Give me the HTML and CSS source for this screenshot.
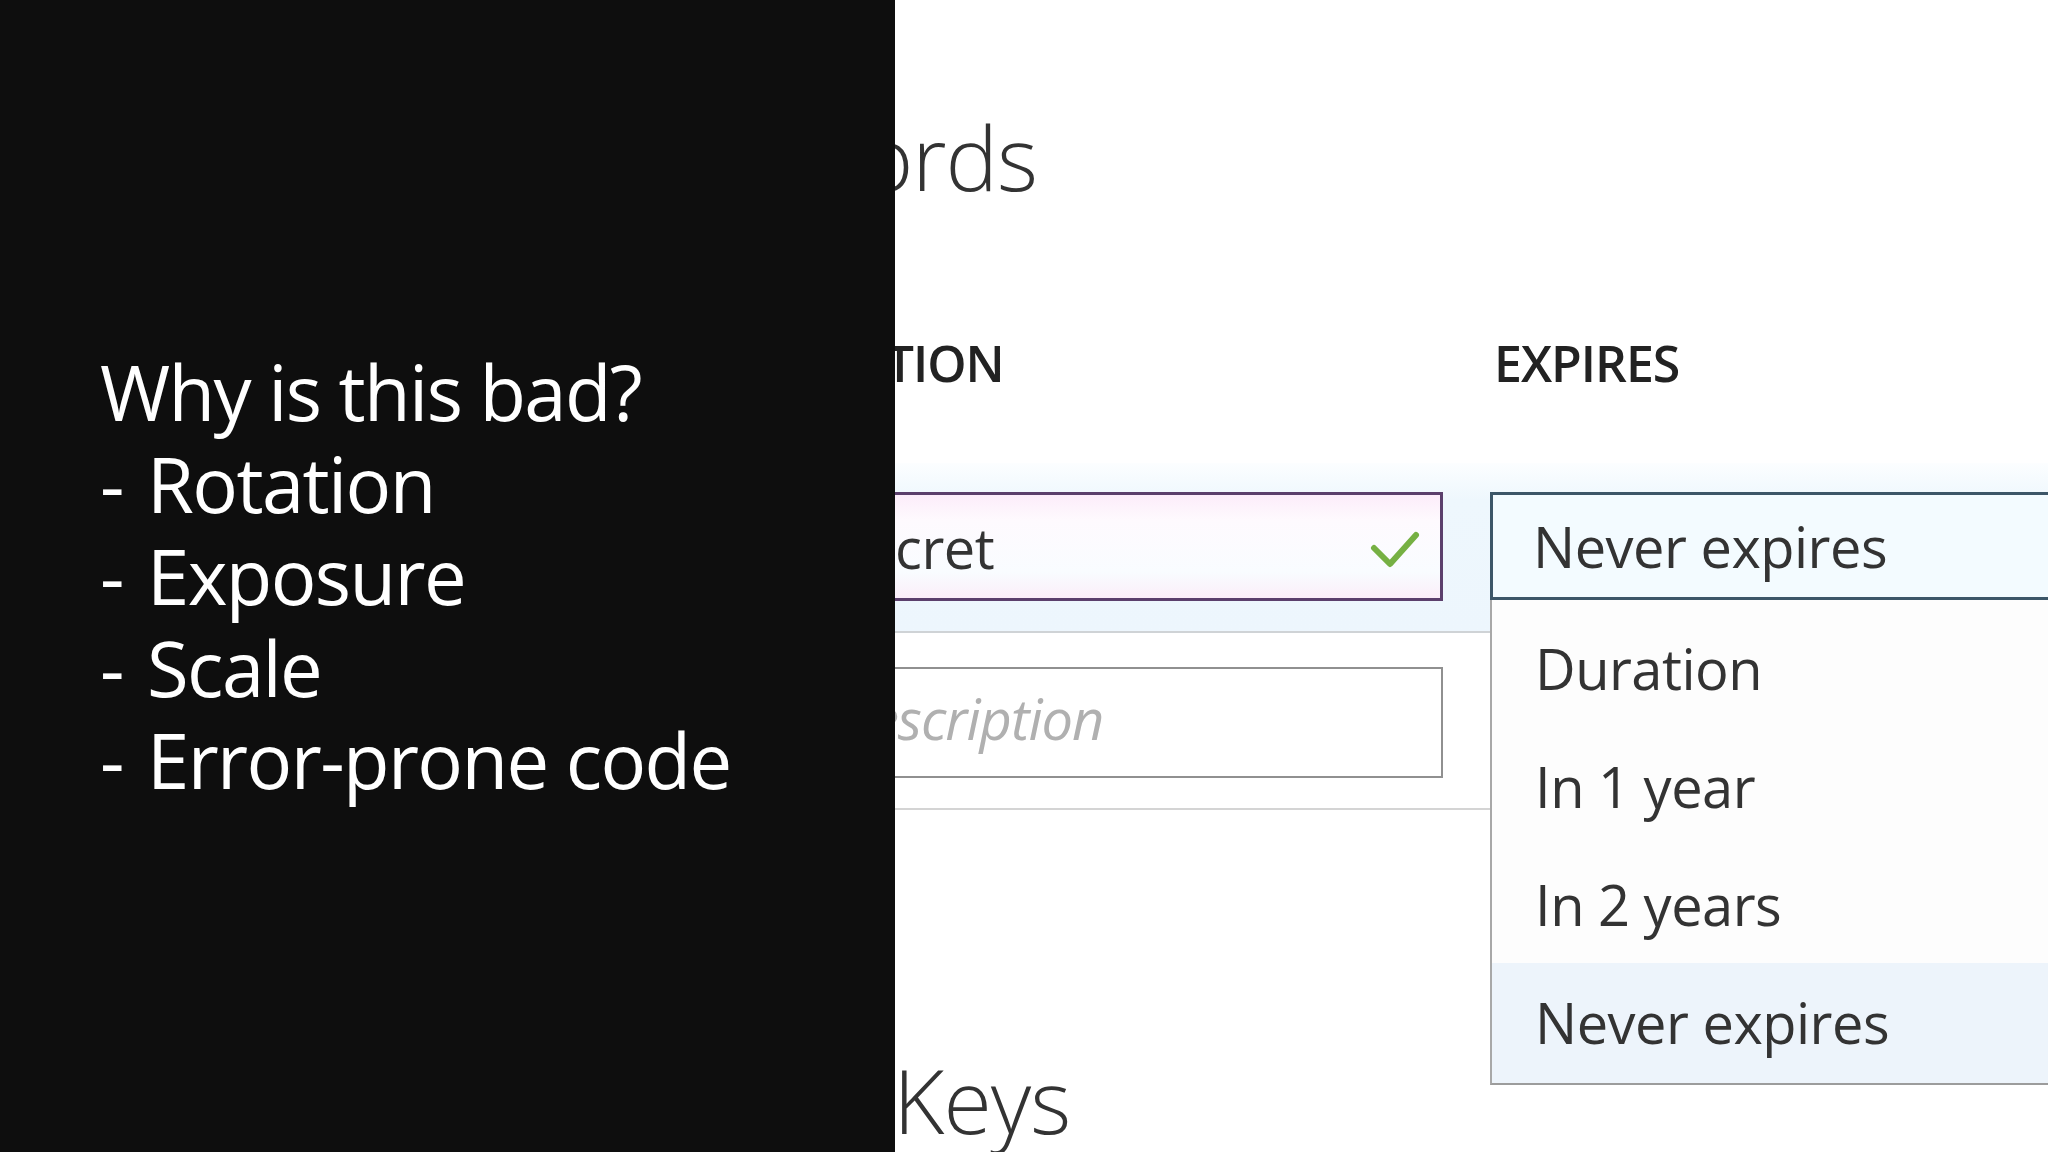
FILE: index.html
```html
<!DOCTYPE html>
<html lang="en">
<head>
<meta charset="utf-8">
<title>Why is this bad?</title>
<link rel="stylesheet" href="styles.css">
</head>
<body>
<main class="slide">
  <section class="notes">
    <div class="notes-text">
      <p class="notes-line">Why is this bad?</p>
      <p class="notes-line"><span class="dash">- </span>Rotation</p>
      <p class="notes-line"><span class="dash">- </span>Exposure</p>
      <p class="notes-line"><span class="dash">- </span>Scale</p>
      <p class="notes-line"><span class="dash">- </span>Error-prone code</p>
    </div>
  </section>
  <section class="shot">
    <div class="blade">
      <h2 class="blade-title pw-title">Passwords</h2>
      <div class="cols-head">
        <span class="col-label">DESCRIPTION</span>
        <span class="col-label col-label-exp">EXPIRES</span>
      </div>
      <div class="row row-active">
        <div class="field field-focus">
          <span class="field-value">my secret</span>
          <svg class="check" width="50" height="40" viewBox="0 0 50 40"><path d="M4 17 L20 33 L46 4" fill="none" stroke="#76b043" stroke-width="6" stroke-linecap="round" stroke-linejoin="round"/></svg>
        </div>
        <div class="select">
          <span class="select-value">Never expires</span>
          <ul class="select-menu">
            <li class="option">Duration</li>
            <li class="option">In 1 year</li>
            <li class="option">In 2 years</li>
            <li class="option option-hover">Never expires</li>
          </ul>
        </div>
      </div>
      <div class="row row-plain">
        <div class="field">
          <span class="placeholder">Key description</span>
        </div>
        <div class="cell-empty"></div>
      </div>
      <h2 class="blade-title keys-title">Public Keys</h2>
    </div>
  </section>
</main>
</body>
</html>
```

FILE: styles.css
```css
html, body {
  margin: 0;
  padding: 0;
  width: 2048px;
  height: 1152px;
  overflow: hidden;
  background: #ffffff;
}

.slide {
  display: flex;
  width: 2048px;
  height: 1152px;
}

.notes {
  flex: 0 0 895px;
  background: #0e0e0e;
  display: flex;
  align-items: center;
  padding-left: 100px;
  box-sizing: border-box;
}

.notes-text {
  color: #ffffff;
  font-family: "Open Sans", "Noto Sans", sans-serif;
  font-size: 76px;
  line-height: 92px;
  letter-spacing: -1.6px;
  font-weight: 500;
}

.notes-line {
  margin: 0;
  white-space: nowrap;
}

.dash {
  margin-right: 6px;
}

.shot {
  flex: 1 1 auto;
  overflow: hidden;
  background: #ffffff;
  font-family: "Open Sans", "Noto Sans", sans-serif;
  color: #333333;
}

.blade {
  margin-left: -299px;
  width: 1600px;
  padding-top: 113px;
}

.blade-title {
  margin: 0;
  font-size: 88px;
  line-height: 88px;
  font-weight: 300;
  color: #333333;
  letter-spacing: -1px;
}

.pw-title {
  margin-left: 27px;
}

.cols-head {
  display: grid;
  grid-template-columns: 757px 1fr;
  column-gap: 47px;
  padding-left: 90px;
  margin-top: 137px;
}

.col-label {
  font-size: 50px;
  line-height: 50px;
  font-weight: 600;
  color: #222222;
  letter-spacing: -1px;
}

.col-label:first-child {
  padding-left: 5px;
}

.col-label-exp {
  padding-left: 4px;
}

.row {
  display: grid;
  grid-template-columns: 757px 1fr;
  column-gap: 47px;
  padding-left: 90px;
}

.row-active {
  margin-top: 75px;
  padding-top: 29px;
  padding-bottom: 30px;
  background: linear-gradient(to bottom, #fcfeff 0%, #eef7fd 22%, #edf6fd 100%);
  border-bottom: 2px solid #cfd3d6;
}

.row-plain {
  padding-top: 34px;
  padding-bottom: 30px;
  border-bottom: 2px solid #d4d4d4;
}

.field {
  display: flex;
  align-items: center;
  justify-content: space-between;
  height: 111px;
  box-sizing: border-box;
  border: 2px solid #909090;
  padding-left: 56px;
  padding-right: 20px;
  background: #ffffff;
  font-size: 56px;
}

.field-focus {
  height: 109px;
  border: 3px solid #5b3f6c;
  background: linear-gradient(to bottom, #fcedfa 0%, #fefafe 25%, #f9fcff 75%, #fbeef9 100%);
}

.field-value {
  line-height: 56px;
  color: #333333;
  letter-spacing: -0.5px;
}

.placeholder {
  line-height: 56px;
  font-style: italic;
  color: #b0b0b0;
  letter-spacing: -1px;
  padding-bottom: 10px;
}

.check {
  display: block;
  margin-top: 8px;
}

.select {
  position: relative;
  display: flex;
  align-items: center;
  height: 108px;
  box-sizing: border-box;
  border: 3px solid #3c5668;
  border-right: none;
  padding-left: 40px;
  background: #f3fbff;
  font-size: 56px;
}

.select-value {
  line-height: 56px;
  color: #333333;
  letter-spacing: -0.5px;
}

.select-menu {
  position: absolute;
  top: 105px;
  left: -3px;
  width: 900px;
  margin: 0;
  padding: 9px 0 0 0;
  list-style: none;
  background: #fdfdfd;
  border-left: 2px solid #a8a8a8;
  border-bottom: 2px solid #9c9c9c;
}

.option {
  height: 118px;
  line-height: 118px;
  padding-left: 43px;
  font-size: 56px;
  color: #333333;
  letter-spacing: -0.5px;
}

.option-hover {
  height: 120px;
  background: #edf4fb;
}

.keys-title {
  margin-top: 246px;
  margin-left: 44px;
}
```
